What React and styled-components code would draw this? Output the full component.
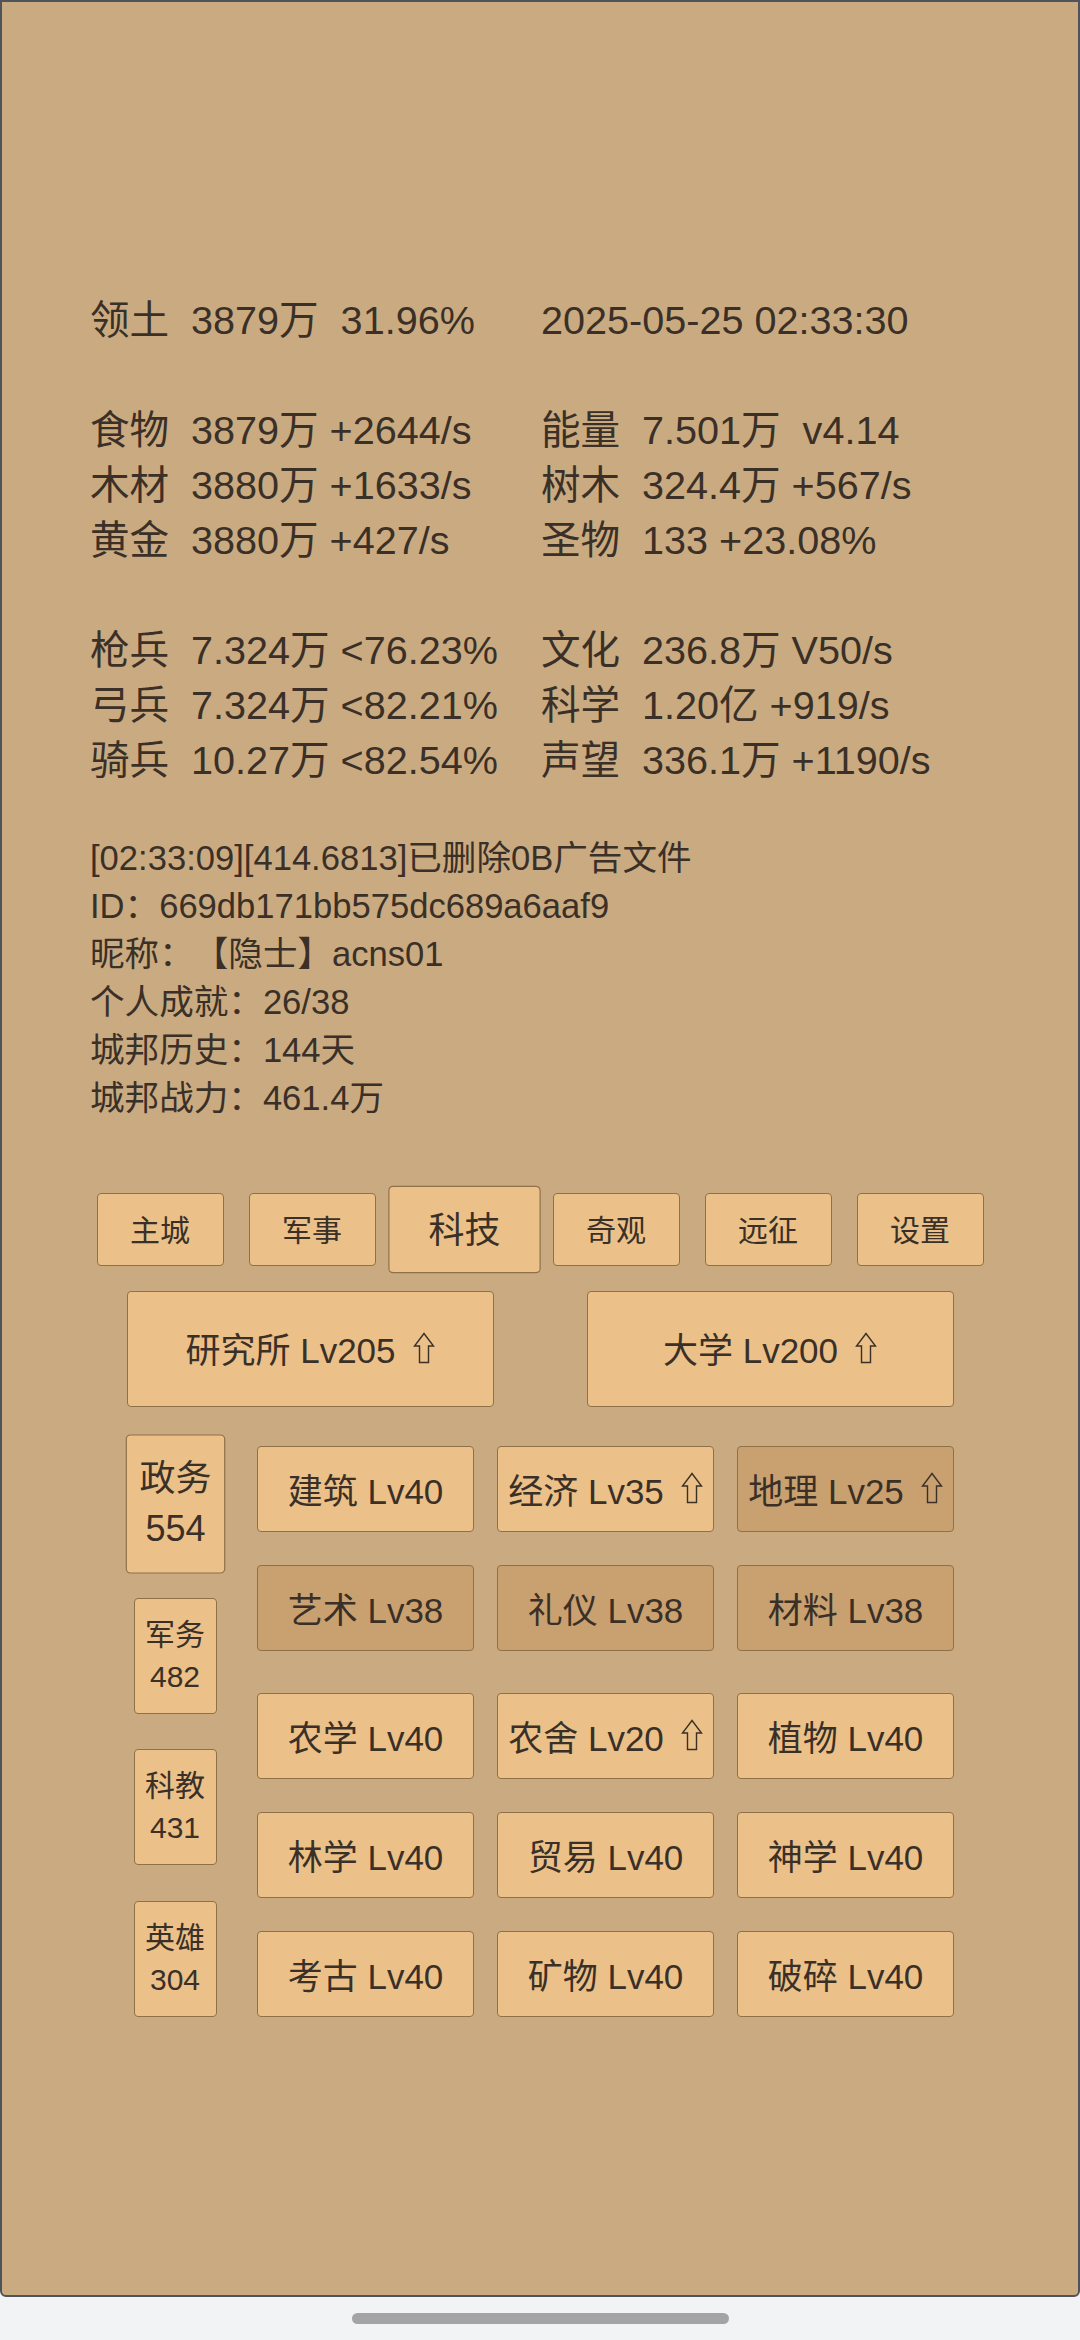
import styled, { createGlobalStyle } from "styled-components";

const GlobalStyle = createGlobalStyle`
  html, body {
    margin: 0;
    padding: 0;
    background: #f2f3f5;
  }
  body {
    font-family: "Liberation Sans", "Noto Sans CJK SC", sans-serif;
    color: #3a3027;
    text-spacing-trim: space-all;
  }
`;

const stats = [
    [
        [["领土", "3879万  31.96%"], [null, "2025-05-25 02:33:30"]],
    ],
    [
        [["食物", "3879万 +2644/s"], ["能量", "7.501万  v4.14"]],
        [["木材", "3880万 +1633/s"], ["树木", "324.4万 +567/s"]],
        [["黄金", "3880万 +427/s"], ["圣物", "133 +23.08%"]],
    ],
    [
        [["枪兵", "7.324万 <76.23%"], ["文化", "236.8万 V50/s"]],
        [["弓兵", "7.324万 <82.21%"], ["科学", "1.20亿 +919/s"]],
        [["骑兵", "10.27万 <82.54%"], ["声望", "336.1万 +1190/s"]],
    ],
];

const info = [
    "[02:33:09][414.6813]已删除0B广告文件",
    "ID：669db171bb575dc689a6aaf9",
    "昵称：【隐士】acns01",
    "个人成就：26/38",
    "城邦历史：144天",
    "城邦战力：461.4万",
];

const tabs = ["主城", "军事", "科技", "奇观", "远征", "设置"];

const sides = [
    ["政务", "554"],
    ["军务", "482"],
    ["科教", "431"],
    ["英雄", "304"],
];

const techGroups = [
    [
        { name: "建筑 Lv40" },
        { name: "经济 Lv35", up: true },
        { name: "地理 Lv25", up: true, dim: true },
        { name: "艺术 Lv38", dim: true },
        { name: "礼仪 Lv38", dim: true },
        { name: "材料 Lv38", dim: true },
    ],
    [
        { name: "农学 Lv40" },
        { name: "农舍 Lv20", up: true },
        { name: "植物 Lv40" },
        { name: "林学 Lv40" },
        { name: "贸易 Lv40" },
        { name: "神学 Lv40" },
        { name: "考古 Lv40" },
        { name: "矿物 Lv40" },
        { name: "破碎 Lv40" },
    ],
];

// hollow "upgrade available" arrow
const UpArrow = () => (
    <ArrowIcon viewBox="0 0 22 32" aria-label="⇧">
        <path
            d="M11 1.5 L20.5 14 L15.5 14 L15.5 30.5 L6.5 30.5 L6.5 14 L1.5 14 Z"
            fill="none"
            stroke="#3a3027"
            strokeWidth="1.4"
            strokeLinejoin="miter"
        />
    </ArrowIcon>
);

export default function App() {
    return (
        <Page>
            <GlobalStyle/>
            <Screen>
                <StatsBlock>
                    {stats.map((group, gi) => (
                        <StatGroup key={gi}>
                            {group.map((row, ri) => (
                                <StatRow key={ri}>
                                    {row.map(([label, value], ci) => (
                                        <StatCell key={ci}>
                                            {label && <StatLabel>{label}</StatLabel>}
                                            <StatValue>{value}</StatValue>
                                        </StatCell>
                                    ))}
                                </StatRow>
                            ))}
                        </StatGroup>
                    ))}
                </StatsBlock>

                <InfoBlock>
                    {info.map((line) => (
                        <InfoLine key={line}>{line}</InfoLine>
                    ))}
                </InfoBlock>

                <TabBar>
                    {tabs.map((t) => (
                        <Tab key={t} $active={t === "科技"}>{t}</Tab>
                    ))}
                </TabBar>

                <BigRow>
                    <BigButton><span>研究所 Lv205</span><UpArrow/></BigButton>
                    <BigButton><span>大学 Lv200</span><UpArrow/></BigButton>
                </BigRow>

                <TechArea>
                    <SideColumn>
                        {sides.map(([name, count], i) => (
                            <SideButton key={name} $active={i === 0}>
                                <span>{name}</span>
                                <span>{count}</span>
                            </SideButton>
                        ))}
                    </SideColumn>

                    <TechColumn>
                        {techGroups.map((group, gi) => (
                            <TechGrid key={gi}>
                                {group.map((t) => (
                                    <TechButton key={t.name} $dim={t.dim}>
                                        <span>{t.name}</span>
                                        {t.up && <UpArrow/>}
                                    </TechButton>
                                ))}
                            </TechGrid>
                        ))}
                    </TechColumn>
                </TechArea>
            </Screen>
            <HomeStrip>
                <HomePill/>
            </HomeStrip>
        </Page>
    );
}

const Page = styled.div`
  width: 1080px;
  height: 2340px;
  display: flex;
  flex-direction: column;
  background: #f2f3f5;
`

const Screen = styled.div`
  box-sizing: border-box;
  height: 2297px;
  border: 2px solid #4e535c;
  border-radius: 0 0 6px 6px;
  background-color: #caab81;
  padding: 291px 0 0 88px;
`

const StatsBlock = styled.div`
  font-size: 39.6px;
  line-height: 55px;
`

const StatGroup = styled.div`
  margin-bottom: 55px;

  &:last-child {
    margin-bottom: 0;
  }
`

const StatRow = styled.div`
  display: grid;
  grid-template-columns: 451px 1fr;
`

const StatCell = styled.div`
  display: flex;
  white-space: pre;
`

const StatLabel = styled.span`
  width: 101px;
  flex-shrink: 0;
`

const StatValue = styled.span`
  white-space: pre;
`

const InfoBlock = styled.div`
  margin-top: 46px;
  font-size: 34.6px;
  line-height: 48px;
`

const InfoLine = styled.div`
  white-space: pre;
`

const ButtonBase = styled.div`
  box-sizing: border-box;
  display: flex;
  align-items: center;
  justify-content: center;
  border: 1.5px solid #8f7049;
  border-radius: 4px;
  background-color: #ebc189;
  color: #3a3027;
`

const ArrowIcon = styled.svg`
  width: 22px;
  height: 32px;
  margin-left: 17px;
  flex-shrink: 0;
`

const TabBar = styled.div`
  display: flex;
  justify-content: center;
  gap: 25px;
  margin: 71px 0 0 -88px;
`

const Tab = styled(ButtonBase)`
  width: 127px;
  height: 73px;
  padding-bottom: 4px;
  font-size: 30px;
  transform: ${(p) => (p.$active ? "scale(1.2)" : "none")};
`

const BigRow = styled.div`
  display: flex;
  justify-content: center;
  gap: 93px;
  margin: 25px 0 0 -88px;
`

const BigButton = styled(ButtonBase)`
  width: 367px;
  height: 116px;
  padding-bottom: 3px;
  font-size: 35px;
  white-space: pre;
`

const TechArea = styled.div`
  display: flex;
  gap: 33px;
  width: 828px;
  margin: 39px 0 0 36px;
`

const SideColumn = styled.div`
  width: 98px;
  display: flex;
  flex-direction: column;
  justify-content: space-between;
  align-items: center;
`

const SideButton = styled(ButtonBase)`
  width: 83px;
  height: 116px;
  flex-direction: column;
  font-size: 30px;
  line-height: 42px;
  transform: ${(p) => (p.$active ? "scale(1.2)" : "none")};
`

const TechColumn = styled.div`
  display: flex;
  flex-direction: column;
  gap: 42px;
`

const TechGrid = styled.div`
  display: grid;
  grid-template-columns: repeat(3, 217px);
  grid-auto-rows: 86px;
  column-gap: 23px;
  row-gap: 33px;
`

const TechButton = styled(ButtonBase)`
  padding-bottom: 2px;
  font-size: 35px;
  white-space: pre;
  background-color: ${(p) => (p.$dim ? "#c9a070" : "#ebc189")};
`

const HomeStrip = styled.div`
  flex: 1;
  display: flex;
  align-items: center;
  justify-content: center;
`

const HomePill = styled.div`
  width: 377px;
  height: 11px;
  border-radius: 6px;
  background-color: #a4a4a6;
`
